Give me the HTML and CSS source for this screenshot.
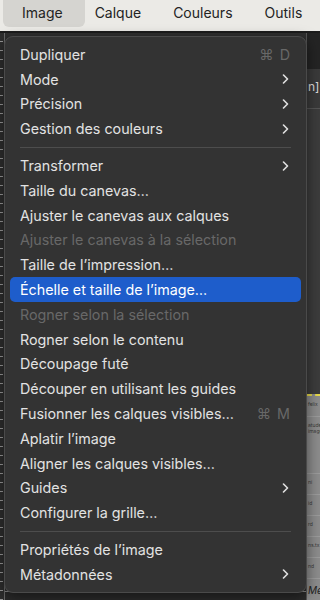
FILE: index.html
```html
<!DOCTYPE html>
<html lang="fr">
<head>
  <meta charset="UTF-8" />
  <meta name="viewport" content="width=device-width, initial-scale=1.0" />
  <title>Image</title>
  <link rel="stylesheet" href="styles.css">
</head>
<body>
  <header class="menubar">
    <span class="menu-title active">Image</span>
    <span class="menu-title next">Calque</span>
    <span class="menu-title">Couleurs</span>
    <span class="menu-title">Outils</span>
  </header>

  <!-- app window behind the open menu -->
  <div class="window">
    <div class="ruler"></div>
    <div class="workspace">
      <div class="canvas"></div>
      <div class="canvas-foot"></div>
    </div>
    <aside class="side-panel">
      <div class="panel-top"></div>
      <div class="panel-tab">n]</div>
      <div class="panel-body"></div>
      <div class="panel-list">
        <div class="list-row">felix</div>
        <div class="list-row tall">atude<br>image</div>
        <div class="list-row">ni</div>
        <div class="list-row">id</div>
        <div class="list-row">rd</div>
        <div class="list-row">ns.tx</div>
        <div class="list-row">nd</div>
        <div class="list-row read">Me</div>
      </div>
    </aside>
  </div>

  <div class="dropdown">
    <div class="item"><span>Dupliquer</span><span class="shortcut">⌘ D</span></div>
    <div class="item"><span>Mode</span><svg class="chevron" viewBox="0 0 6 10"><polyline points="1,1 5,5 1,9"/></svg></div>
    <div class="item"><span>Précision</span><svg class="chevron" viewBox="0 0 6 10"><polyline points="1,1 5,5 1,9"/></svg></div>
    <div class="item"><span>Gestion des couleurs</span><svg class="chevron" viewBox="0 0 6 10"><polyline points="1,1 5,5 1,9"/></svg></div>
    <div class="separator"></div>
    <div class="item"><span>Transformer</span><svg class="chevron" viewBox="0 0 6 10"><polyline points="1,1 5,5 1,9"/></svg></div>
    <div class="item"><span>Taille du canevas…</span></div>
    <div class="item"><span>Ajuster le canevas aux calques</span></div>
    <div class="item disabled"><span>Ajuster le canevas à la sélection</span></div>
    <div class="item"><span>Taille de l’impression…</span></div>
    <div class="item selected"><span>Échelle et taille de l’image…</span></div>
    <div class="item disabled"><span>Rogner selon la sélection</span></div>
    <div class="item"><span>Rogner selon le contenu</span></div>
    <div class="item"><span>Découpage futé</span></div>
    <div class="item"><span>Découper en utilisant les guides</span></div>
    <div class="item"><span>Fusionner les calques visibles…</span><span class="shortcut">⌘ M</span></div>
    <div class="item"><span>Aplatir l’image</span></div>
    <div class="item"><span>Aligner les calques visibles…</span></div>
    <div class="item"><span>Guides</span><svg class="chevron" viewBox="0 0 6 10"><polyline points="1,1 5,5 1,9"/></svg></div>
    <div class="item"><span>Configurer la grille…</span></div>
    <div class="separator"></div>
    <div class="item"><span>Propriétés de l’image</span></div>
    <div class="item"><span>Métadonnées</span><svg class="chevron" viewBox="0 0 6 10"><polyline points="1,1 5,5 1,9"/></svg></div>
  </div>
</body>
</html>
```

FILE: styles.css
```css
:root {
  --bar-bg: #ebeae6;
  --bar-active: #d5d4d0;
  --menu-bg: #333333;
  --menu-text: #e2e2e2;
  --menu-dim: #686868;
  --accent: #1e5dcb;
}

* {
  margin: 0;
  padding: 0;
  box-sizing: border-box;
}

body {
  width: 320px;
  height: 600px;
  overflow: hidden;
  position: relative;
  font-family: Inter, "Noto Sans", sans-serif;
  font-size: 14.3px;
  background-color: #2b2b2b;
}

.menubar {
  display: flex;
  align-items: flex-start;
  height: 33px;
  padding-left: 3px;
  background-color: var(--bar-bg);
  border-bottom: 2px solid #1c1c1c;
  white-space: nowrap;
  overflow: hidden;
}

.menu-title {
  height: 27px;
  line-height: 26px;
  padding: 0 16px;
  color: #232323;
  font-size: 14px;
}

.menu-title.active {
  background-color: var(--bar-active);
  padding: 0 22px 0 19px;
  border-radius: 0 0 6px 6px;
}

.menu-title.next {
  margin-left: -6px;
}

/* window behind */
.window {
  display: flex;
  height: 567px;
}

.ruler {
  width: 5px;
  background-color: #2e2e2e;
  background-image: repeating-linear-gradient(to bottom, transparent 0, transparent 8px, #9a9a9a 8px, #9a9a9a 9px);
  background-size: 3px 100%;
  background-repeat: no-repeat;
  border-right: 1px solid #6b6b6b;
}

.workspace {
  flex: 1;
  display: flex;
  flex-direction: column;
}

.canvas {
  flex: 1;
  background-color: #2f2f2f;
}

.canvas-foot {
  height: 9px;
  border-top: 1px solid #8a8a8a;
  background-color: #2b2b2b;
}

.side-panel {
  width: 14px;
  display: flex;
  flex-direction: column;
  border-left: 1px solid #555;
  overflow: hidden;
}

.panel-top {
  height: 36px;
  background-color: #242424;
}

.panel-tab {
  height: 40px;
  padding-top: 10px;
  padding-left: 1px;
  color: #dcdcdc;
  font-size: 12px;
  background-color: #3a3a3a;
  border-bottom: 1px solid #555;
  white-space: nowrap;
}

.panel-body {
  flex: 1;
  background-color: #3c3c3c;
}

.panel-list {
  height: 206px;
  display: flex;
  flex-direction: column;
  background-color: #8c8c8c;
  border-top: 2px dashed #e6d84a;
  font-size: 5px;
  color: #3a3a3a;
}

.list-row {
  height: 22px;
  padding: 5px 0 0 1px;
  border-bottom: 1px solid #9c9c9c;
  white-space: nowrap;
}

.list-row.tall {
  height: 60px;
}

.list-row.read {
  border-bottom: none;
  font-size: 10px;
  font-style: italic;
  padding-top: 5px;
  color: #222;
}

/* dropdown menu */
.dropdown {
  position: absolute;
  top: 36px;
  left: 4px;
  width: 303px;
  padding: 5px;
  background-color: var(--menu-bg);
  border: 1px solid #4a4a4a;
  border-radius: 9px;
  box-shadow: 0 4px 14px rgba(0, 0, 0, 0.5);
}

.item {
  display: flex;
  justify-content: space-between;
  align-items: center;
  height: 24.8px;
  padding: 0 12px 0 10px;
  color: var(--menu-text);
  border-radius: 5px;
  white-space: nowrap;
}

.item.disabled {
  color: var(--menu-dim);
}

.item.selected {
  background-color: var(--accent);
  color: #ffffff;
}

.shortcut {
  color: var(--menu-dim);
  letter-spacing: 1px;
  margin-right: -2px;
}

.chevron {
  width: 7px;
  height: 10px;
  fill: none;
  stroke: #e2e2e2;
  stroke-width: 1.6;
  stroke-linecap: round;
  stroke-linejoin: round;
}

.separator {
  height: 12px;
  margin: 0 10px;
  display: flex;
  align-items: center;
}

.separator::after {
  content: "";
  flex: 1;
  height: 1px;
  background-color: #4d4d4d;
}
```
